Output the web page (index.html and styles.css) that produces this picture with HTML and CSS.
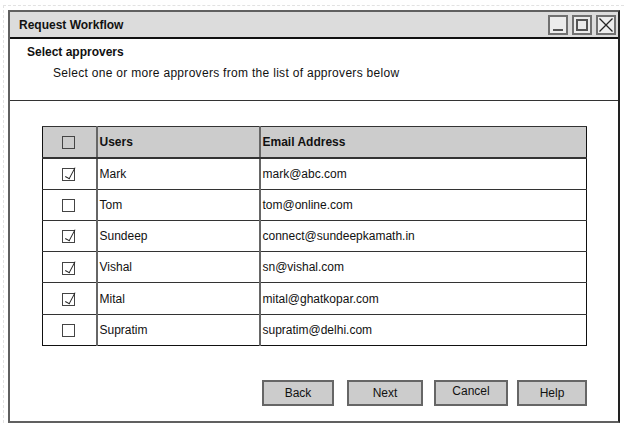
FILE: index.html
```html
<!DOCTYPE html>
<html>
<head>
<meta charset="utf-8">
<link rel="stylesheet" href="styles.css">
</head>
<body>
<div class="canvas">
  <div class="window">
    <div class="titlebar">
      <span class="title">Request Workflow</span>
      <div class="winbtns">
        <span class="winbtn"><svg width="16" height="16" viewBox="0 0 16 16"><line x1="3" y1="13" x2="13" y2="13" stroke="#555" stroke-width="2"/></svg></span>
        <span class="winbtn"><svg width="16" height="16" viewBox="0 0 16 16"><rect x="3" y="3" width="10" height="10" fill="none" stroke="#555" stroke-width="2"/></svg></span>
        <span class="winbtn"><svg width="16" height="16" viewBox="0 0 16 16"><path d="M1.5 1.5 L14.5 14.5 M14.5 1.5 L1.5 14.5" stroke="#222" stroke-width="1.3"/></svg></span>
      </div>
    </div>
    <div class="header">
      <div class="h-title">Select approvers</div>
      <div class="h-sub">Select one or more approvers from the list of approvers below</div>
    </div>
    <div class="content">
      <table class="grid">
        <thead>
          <tr>
            <th class="c-chk"><span class="cb"></span></th>
            <th class="c-user">Users</th>
            <th class="c-mail">Email Address</th>
          </tr>
        </thead>
        <tbody>
          <tr><td class="c-chk"><span class="cb on"></span></td><td>Mark</td><td>mark@abc.com</td></tr>
          <tr><td class="c-chk"><span class="cb"></span></td><td>Tom</td><td>tom@online.com</td></tr>
          <tr><td class="c-chk"><span class="cb on"></span></td><td>Sundeep</td><td>connect@sundeepkamath.in</td></tr>
          <tr><td class="c-chk"><span class="cb on"></span></td><td>Vishal</td><td>sn@vishal.com</td></tr>
          <tr><td class="c-chk"><span class="cb on"></span></td><td>Mital</td><td>mital@ghatkopar.com</td></tr>
          <tr><td class="c-chk"><span class="cb"></span></td><td>Supratim</td><td>supratim@delhi.com</td></tr>
        </tbody>
      </table>
      <div class="actions">
        <button class="btn b-back">Back</button>
        <button class="btn b-next">Next</button>
        <button class="btn b-cancel">Cancel</button>
        <button class="btn b-help">Help</button>
      </div>
    </div>
  </div>
</div>
</body>
</html>
```

FILE: styles.css
```css
* { box-sizing: border-box; }
html, body { margin: 0; padding: 0; background: #fff; }
body {
  font-family: "Liberation Sans", Arial, sans-serif;
  font-size: 12px;
  color: #111;
}
.canvas {
  margin: 5px 0 0 3px;
  border-top: 1px dashed #e2e2e2;
  border-left: 1px dashed #e2e2e2;
  padding: 4px 0 0 4px;
  width: 621px;
}
.window {
  width: 612px;
  height: 413px;
  border: 2px solid #606060;
  border-right-color: #222;
  display: flex;
  flex-direction: column;
  background: #fff;
}
.titlebar {
  height: 27px;
  background: #dcdcdc;
  border-bottom: 2px solid #111;
  display: flex;
  align-items: center;
  justify-content: space-between;
  padding: 0 2px 0 9px;
}
.title { font-weight: bold; font-size: 12px; }
.winbtns { display: flex; gap: 4px; }
.winbtn {
  width: 20px;
  height: 20px;
  border: 2px solid #707070;
  background: #ececec;
  display: flex;
  align-items: center;
  justify-content: center;
}
.header {
  height: 62px;
  border-bottom: 1px solid #333;
  padding: 5px 0 0 17px;
}
.h-title { font-weight: bold; line-height: 16px; }
.h-sub { margin-top: 5px; padding-left: 26px; line-height: 16px; letter-spacing: 0.3px; }
.content {
  flex: 1;
  padding: 25px 0 0 32px;
}
.grid {
  width: 545px;
  border-collapse: collapse;
  border: 1px solid #111;
  table-layout: fixed;
}
.grid th, .grid td {
  height: 31.3px;
  padding: 0 3px 0 2px;
  text-align: left;
  border-top: 1px solid #333;
  border-left: 2px solid #666;
  font-size: 12px;
}
.grid th {
  background: #cccccc;
  font-weight: bold;
  border-bottom: 2px solid #333;
}
.grid .c-chk { width: 54px; text-align: center; border-left: none; padding: 0; }
.grid .c-user { width: 163px; }
.cb {
  display: inline-block;
  width: 13px;
  height: 13px;
  border: 1.5px solid #444;
  vertical-align: middle;
  position: relative;
  margin-left: -2px;
}
.cb.on::after {
  content: "";
  position: absolute;
  left: 2px;
  top: -5px;
  width: 4px;
  height: 12px;
  border-right: 1.5px solid #222;
  border-bottom: 1.5px solid #222;
  transform: rotate(28deg);
  transform-origin: bottom left;
}
.actions {
  display: flex;
  margin-top: 34px;
  width: 545px;
  justify-content: flex-end;
}
.btn {
  height: 26px;
  background: #cccccc;
  border: 2px solid #666;
  font-family: "Liberation Sans", Arial, sans-serif;
  font-size: 12px;
  color: #111;
  padding: 0;
}
.b-back { width: 72px; }
.b-next { width: 76px; margin-left: 13px; }
.b-cancel { width: 74px; margin-left: 11px; padding-bottom: 4px; }
.b-help { width: 70px; margin-left: 9px; }
```
